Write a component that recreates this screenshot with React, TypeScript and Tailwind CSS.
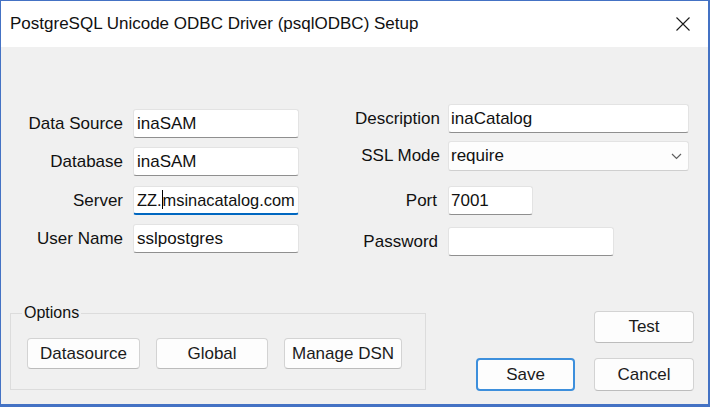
import React from 'react';

const font = { fontFamily: '"Liberation Sans", Arial, sans-serif' };

function TextBox({ value, width, focused }: { value?: React.ReactNode; width: string; focused?: boolean }) {
  return (
    <div
      className={`${width} h-[29px] bg-white rounded-[3px] border border-[#e3e3e3] flex items-center pl-[3px] overflow-hidden whitespace-nowrap text-[17px] text-[#111] ${
        focused ? 'border-b-2 border-b-[#0067c0]' : 'border-b-[#8f8f8f]'
      }`}
    >
      <span className="shrink-0 flex items-center">{value}</span>
    </div>
  );
}

function Btn({ label, className }: { label: string; className: string }) {
  return (
    <div
      className={`${className} flex items-center justify-center rounded-[4px] bg-[#fdfdfd] text-[17px] text-[#1b1b1b]`}
    >
      {label}
    </div>
  );
}

export default function App() {
  return (
    <div
      style={font}
      className="w-[710px] h-[407px] flex flex-col border-l border-t border-r-[2px] border-b-[3px] border-[#4472c4] overflow-hidden"
    >
      {/* title bar */}
      <div className="h-[46px] bg-white flex items-center justify-between pl-[9px] pr-[17px] shrink-0">
        <span className="text-[17px] text-[#111]">PostgreSQL Unicode ODBC Driver (psqlODBC) Setup</span>
        <svg width="16" height="16" viewBox="0 0 16 16">
          <path d="M1.5 1.5 L14.5 14.5 M14.5 1.5 L1.5 14.5" stroke="#1a1a1a" strokeWidth="1.1" />
        </svg>
      </div>

      <div className="flex-1 bg-[#f0f0f0] flex flex-col">
        {/* fields */}
        <div className="flex items-start">
          <div className="ml-[9px] mt-[62px] flex flex-col">
            {[
              { label: 'Data Source', value: 'inaSAM' },
              { label: 'Database', value: 'inaSAM' },
              {
                label: 'Server',
                value: (
                  <span className="flex items-center text-[16.4px]">
                    ZZ.<span className="inline-block shrink-0 w-[1px] h-[19px] bg-black" />msinacatalog.com
                  </span>
                ),
                focused: true,
              },
              { label: 'User Name', value: 'sslpostgres' },
            ].map((f, i) => (
              <div key={f.label} className={`flex items-center gap-[10px] ${i === 0 ? '' : i === 2 ? 'mt-[10px]' : 'mt-[9px]'}`}>
                <span className="w-[113px] text-right text-[17px] text-[#111]">{f.label}</span>
                <TextBox value={f.value} width="w-[166px]" focused={f.focused} />
              </div>
            ))}
          </div>

          <div className="ml-[41px] mt-[57px] flex flex-col">
            <div className="flex items-center gap-[8px]">
              <span className="w-[100px] text-right text-[17px] text-[#111]">Description</span>
              <TextBox value={<span className="-ml-[1px]">inaCatalog</span>} width="w-[241px]" />
            </div>
            <div className="flex items-center gap-[8px] mt-[8px]">
              <span className="w-[100px] text-right text-[17px] text-[#111]">SSL Mode</span>
              <div className="w-[241px] h-[30px] bg-[#fdfdfd] rounded-[3px] border border-[#e3e3e3] border-b-[#cfcfcf] flex items-center justify-between pl-[2px] pr-[6px] text-[17px] text-[#111]">
                <span>require</span>
                <svg width="11" height="7" viewBox="0 0 11 7">
                  <path d="M1 1 L5.5 5.5 L10 1" fill="none" stroke="#5f5f5f" strokeWidth="1.2" />
                </svg>
              </div>
            </div>
            <div className="flex items-center gap-[8px] mt-[15px]">
              <span className="w-[97px] mr-[3px] text-right text-[17px] text-[#111]">Port</span>
              <TextBox value={<span className="-ml-[1px]">7001</span>} width="w-[85px]" />
            </div>
            <div className="flex items-center gap-[8px] mt-[12px]">
              <span className="w-[98px] mr-[2px] text-right text-[17px] text-[#111]">Password</span>
              <TextBox width="w-[166px]" />
            </div>
          </div>
        </div>

        {/* bottom */}
        <div className="flex items-start mt-[55px]">
          <div className="relative ml-[9px] mt-[2px] w-[416px] h-[77px] border border-[#dcdcdc] pt-[24px] pl-[16px] flex gap-[16px]">
            <span className="absolute left-[11px] -top-[10px] px-[2px] bg-[#f0f0f0] text-[16px] leading-[18px] text-[#111]">
              Options
            </span>
            <Btn label="Datasource" className="w-[113px] h-[31px] border border-[#d3d3d3] border-b-[#bcbcbc]" />
            <Btn label="Global" className="w-[112px] h-[31px] border border-[#d3d3d3] border-b-[#bcbcbc]" />
            <Btn label="Manage DSN" className="w-[118px] h-[31px] border border-[#d3d3d3] border-b-[#bcbcbc]" />
          </div>

          <div className="ml-[50px] w-[218px] flex flex-col">
            <Btn label="Test" className="self-end w-[100px] h-[32px] border border-[#d3d3d3] border-b-[#bcbcbc]" />
            <div className="flex mt-[15px] gap-[19px]">
              <Btn label="Save" className="w-[99px] h-[33px] border-2 border-[#3d8fdc]" />
              <Btn label="Cancel" className="w-[100px] h-[33px] border border-[#d3d3d3] border-b-[#bcbcbc]" />
            </div>
          </div>
        </div>
      </div>
    </div>
  );
}
